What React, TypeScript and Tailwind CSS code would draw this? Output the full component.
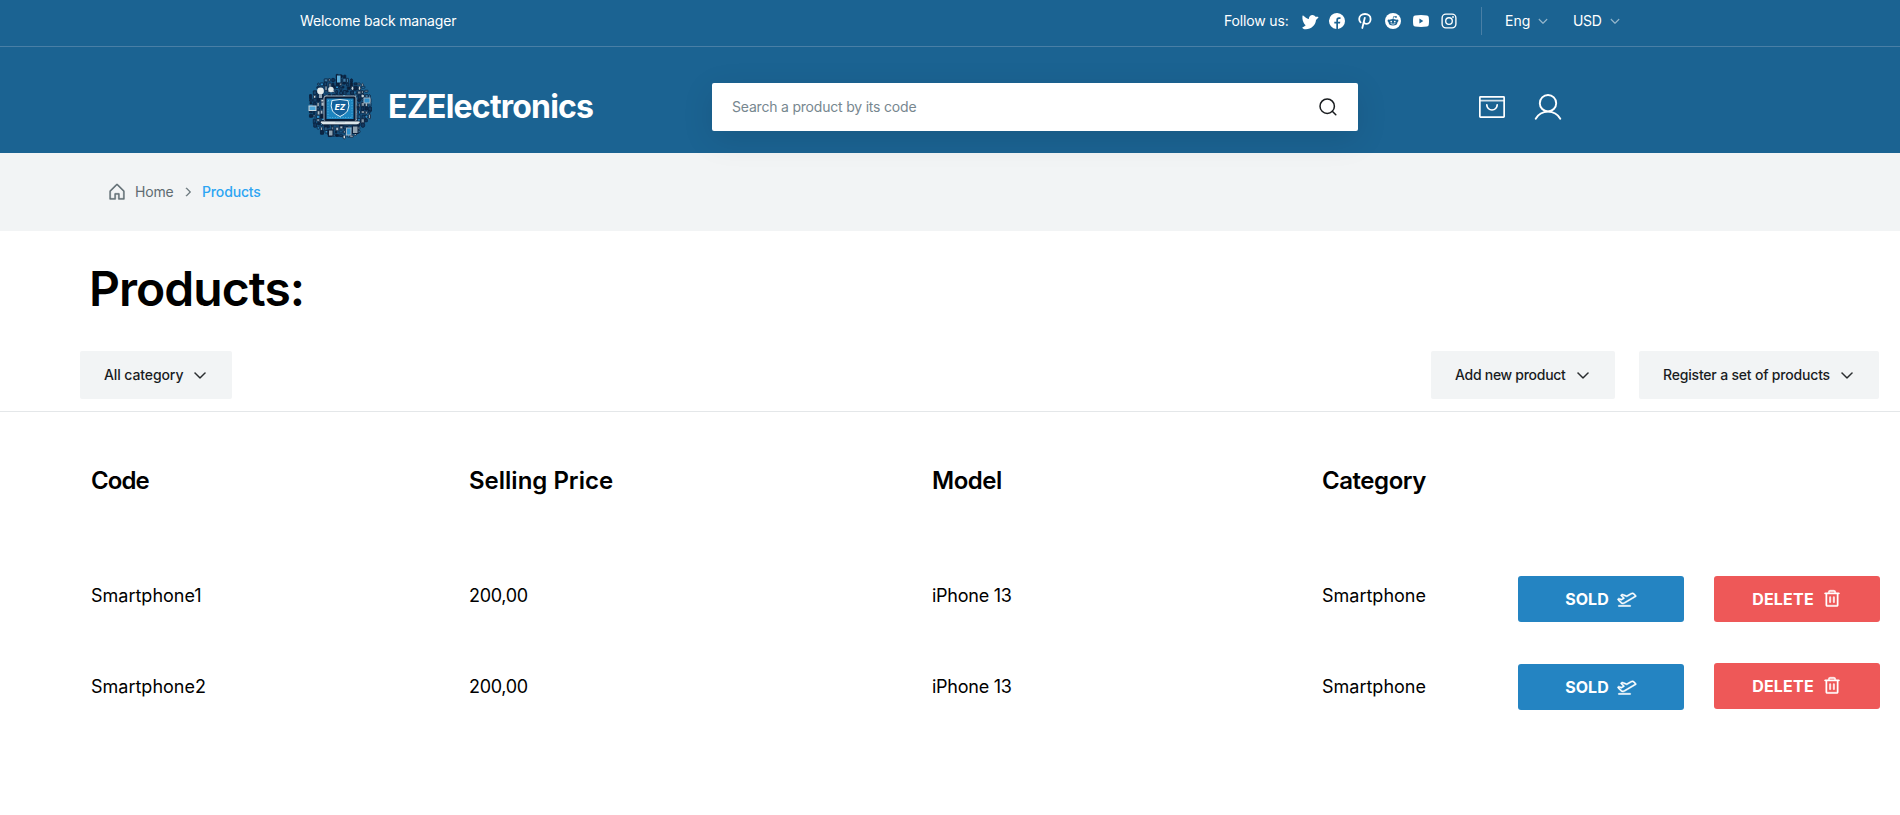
import type { ReactNode } from "react";
import { PiAirplaneTakeoff, PiTrash, PiCaretDown, PiCaretRight, PiTwitterLogoFill, PiHouse } from "react-icons/pi";

type Shape = { x: number; y: number; w: number; h: number; color: string; round: boolean };

const LOGO_COLORS = ["#0b2545", "#12365c", "#a9bcc9", "#2f8fca", "#7f95a5", "#0d2038", "#3f7ba5", "#c9d6dd", "#17466f"];

function buildShapes(): Shape[] {
  const shapes: Shape[] = [];
  let seed = 11;
  const next = () => {
    seed = (seed * 16807) % 2147483647;
    return seed / 2147483647;
  };
  for (let row = 0; row < 17; row++) {
    for (let col = 0; col < 17; col++) {
      const x = 1 + col * 3.7 + next() * 1.4;
      const y = 1 + row * 4 + next() * 1.4;
      const w = 1.4 + next() * 2.2;
      const h = 1.6 + next() * 3;
      const color = LOGO_COLORS[Math.floor(next() * LOGO_COLORS.length)];
      const round = next() > 0.75;
      if (Math.hypot(x + w / 2 - 32, y + h / 2 - 34) < 31.5) {
        shapes.push({ x, y, w, h, color, round });
      }
    }
  }
  return shapes;
}

const SHAPES = buildShapes();

function Logo() {
  return (
    <svg width="64" height="68" viewBox="0 0 64 68" className="shrink-0">
      <circle cx="32" cy="34" r="28" fill="#0d2c50" opacity="0.35" />
      {SHAPES.map((s, i) => (
        <rect key={i} x={s.x} y={s.y} width={s.w} height={s.h} rx={s.round ? 2 : 0.3} fill={s.color} stroke="#0a1f3b" strokeWidth="0.8" />
      ))}
      <circle cx="12.5" cy="18" r="3.4" fill="#e6ecec" />
      <rect x="11" y="21" width="3" height="4" fill="#93a5b3" />
      <circle cx="23" cy="16.5" r="2.7" fill="#dfe7e8" />
      <rect x="28.500" y="2" width="4.500" height="8" fill="#5fb0dc" stroke="#0a1f3b" />
      <rect x="38.500" y="55" width="4.500" height="7" fill="#2f8fca" stroke="#9fb4c4" />
      <rect x="44.500" y="53" width="5.500" height="7.500" fill="#93a5b3" stroke="#0a1f3b" />
      <rect x="20.500" y="57" width="4.500" height="6" fill="#93a5b3" stroke="#0a1f3b" />
      <rect x="1" y="33" width="7" height="4.500" fill="#4aa3d6" stroke="#c9d6dd" />
      <rect x="56" y="25" width="6" height="5" fill="#2f8fca" stroke="#9fb4c4" />
      <rect x="16" y="23" width="32" height="25.500" rx="2" fill="#0a1d36" stroke="#e3ebee" strokeWidth="0.7" />
      <rect x="18.500" y="25.500" width="27" height="20.500" fill="#1c84bf" />
      <rect x="20" y="27.500" width="24" height="17" fill="none" stroke="#57b3df" strokeWidth="1" strokeDasharray="1 1.6" />
      <path d="M24 27.500 L32 26.500 L40 27.500 Q42 33 39.500 38 Q37 41.500 32 43.500 Q27 41.500 24.500 38 Q22 33 24 27.500Z" fill="#14609a" stroke="#dff1f8" strokeWidth="1" />
      <text x="32" y="37" textAnchor="middle" fontSize="8" fontWeight="800" fontStyle="italic" fill="#ffffff">EZ</text>
      <path d="M12.500 48h39.500v1.500q-1 2.300-3 2.300H15.500q-2 0-3-2.300z" fill="#dce6ea" stroke="#0a1d36" strokeWidth="0.8" />
      <rect x="27" y="48" width="10" height="1.200" fill="#7e93a3" />
    </svg>
  );
}

function Facebook() {
  return (
    <svg width="16" height="16" viewBox="0 0 16 16" fill="currentColor">
      <path d="M16 8A8 8 0 1 0 7.300 15.970V10.500H5.300V8.700h2V7a2.700 2.700 0 0 1 2.700-2.700h1.500v1.700H10.100A1.100 1.100 0 0 0 9 7.100v1.600h2.300l-.3 1.800H9v5.430A8 8 0 0 0 16 8Z" />
    </svg>
  );
}

function Pinterest() {
  return (
    <svg width="14" height="16" viewBox="0 0 14 16" fill="none" stroke="currentColor" strokeWidth="1.800" strokeLinecap="round">
      <path d="M6.800 4.800 4.300 15" />
      <path d="M2.600 9.400A4.700 4.700 0 0 1 1.200 6C1.200 3 3.600 1 7 1s5.600 2.100 5.600 4.900c0 2.900-1.700 5-4 5-1.400 0-2.500-.7-2.800-1.700" />
    </svg>
  );
}

function Reddit() {
  return (
    <svg width="16" height="16" viewBox="0 0 16 16">
      <circle cx="8" cy="8" r="8" fill="#ffffff" />
      <g fill="#1b6392">
        <ellipse cx="8" cy="9.300" rx="4.400" ry="3.200" />
        <circle cx="3.800" cy="7.700" r="1.200" />
        <circle cx="12.200" cy="7.700" r="1.200" />
        <circle cx="11" cy="3.900" r="0.900" />
      </g>
      <path d="M8 6.300l.6-2.800 2.200.4" fill="none" stroke="#1b6392" strokeWidth="0.700" />
      <circle cx="6.200" cy="8.600" r="0.850" fill="#ffffff" />
      <circle cx="9.800" cy="8.600" r="0.850" fill="#ffffff" />
      <path d="M6 10.700q2 1.300 4 0" fill="none" stroke="#ffffff" strokeWidth="0.700" strokeLinecap="round" />
    </svg>
  );
}

function Youtube() {
  return (
    <svg width="16" height="12" viewBox="0 0 16 12" fill="currentColor" fillRule="evenodd">
      <path d="M2 .4Q8-.3 14 .4q1.400.2 1.700 1.500.6 4.100 0 8.200-.3 1.300-1.700 1.500-6 .7-12 0Q.6 11.400.3 10.100q-.6-4.100 0-8.200Q.6.600 2 .4ZM6.400 3.600v4.800L10.300 6Z" />
    </svg>
  );
}

function Instagram() {
  return (
    <svg width="16" height="16" viewBox="0 0 16 16" fill="none" stroke="currentColor" strokeWidth="1.350">
      <rect x="1.100" y="1.100" width="13.800" height="13.800" rx="3.800" />
      <circle cx="8" cy="8" r="3.300" />
      <circle cx="12" cy="4" r="0.900" fill="currentColor" stroke="none" />
    </svg>
  );
}

function Bag() {
  return (
    <svg width="26" height="22" viewBox="0 0 26 22" fill="none" stroke="#ffffff" strokeWidth="1.700" strokeLinejoin="round" strokeLinecap="round">
      <rect x="0.850" y="0.850" width="24.300" height="20.300" rx="0.600" />
      <path d="M1 4.700h24" opacity="0.800" />
      <path d="M7.800 8.800a5.200 5.200 0 0 0 10.400 0" />
    </svg>
  );
}

function User() {
  return (
    <svg width="28" height="26" viewBox="0 0 28 26" fill="none" stroke="#ffffff" strokeWidth="1.900" strokeLinecap="round">
      <circle cx="14" cy="9.200" r="8.200" />
      <path d="M1.700 24.700a14.200 14.200 0 0 1 24.600 0" />
    </svg>
  );
}

function Magnifier() {
  return (
    <svg width="18" height="18" viewBox="0 0 18 18" fill="none" stroke="#191c1f" strokeWidth="1.500" strokeLinecap="round">
      <circle cx="8.200" cy="8.200" r="7.200" />
      <path d="m13.300 13.300 3.500 3.500" />
    </svg>
  );
}

function Menu({ children, className }: { children: ReactNode; className: string }) {
  return (
    <button className={`flex h-12 items-center justify-between rounded-[2px] bg-[#f2f4f5] pr-6 pl-6 text-sm font-medium whitespace-nowrap text-[#191c1f] ${className}`}>
      {children}
      <PiCaretDown size={16} stroke="currentColor" strokeWidth={8} className="shrink-0" />
    </button>
  );
}

function ProductRow({ code, className, textClass, deleteClass }: { code: string; className: string; textClass: string; deleteClass: string }) {
  return (
    <div className={`grid h-[46px] grid-cols-[378px_463px_390px_196px_196px_166px] pl-[91px] text-[18px] leading-6 text-black ${className}`}>
      <span className={textClass}>{code}</span>
      <span className={`tracking-[-0.3px] ${textClass}`}>200,00</span>
      <span className={`tracking-[-0.25px] ${textClass}`}>iPhone 13</span>
      <span className={textClass}>Smartphone</span>
      <button className="flex h-[46px] w-[166px] items-center justify-center gap-2 rounded-[3px] bg-[#2484c2] text-base font-bold text-white">
        SOLD <PiAirplaneTakeoff size={20} stroke="currentColor" strokeWidth={6} />
      </button>
      <button className={`flex h-[46px] w-[166px] items-center justify-center gap-2 rounded-[3px] bg-[#ee5858] text-base font-bold tracking-[0.2px] text-white ${deleteClass}`}>
        DELETE <PiTrash size={20} stroke="currentColor" strokeWidth={6} />
      </button>
    </div>
  );
}

export default function App() {
  return (
    <div className="h-[815px] w-[1900px] overflow-hidden bg-white font-['Inter','Liberation_Sans',sans-serif]">
      <header className="h-[153px] bg-[#1b6392] text-white">
        <div className="flex h-[47px] items-center border-b border-[#497fa6] pb-1 pl-[300px] text-sm leading-5">
          <span className="w-[924px] tracking-[-0.18px]">Welcome back manager</span>
          <span className="w-[75px] tracking-[-0.15px]">Follow us:</span>
          <div className="flex w-[182px] items-center gap-2">
            <span className="flex w-5 justify-center"><PiTwitterLogoFill size={19} /></span>
            <span className="flex w-5 justify-center"><Facebook /></span>
            <span className="flex w-5 justify-center"><Pinterest /></span>
            <span className="flex w-5 justify-center"><Reddit /></span>
            <span className="flex w-5 justify-center"><Youtube /></span>
            <span className="flex w-5 justify-center"><Instagram /></span>
          </div>
          <span className="h-7 w-px bg-[#497fa6]" />
          <span className="ml-[23px] w-[32px]">Eng</span>
          <PiCaretDown size={12} stroke="currentColor" strokeWidth={12} className="text-[#a4c1d3]" />
          <span className="ml-[24px] w-[36px] tracking-[-0.3px]">USD</span>
          <PiCaretDown size={12} stroke="currentColor" strokeWidth={12} className="text-[#a4c1d3]" />
        </div>
        <div className="flex h-[106px] items-center pt-[14px] pl-[308px]">
          <Logo />
          <span className="ml-[16px] w-[324px] text-[32px] leading-10 font-bold tracking-[-0.8px]">EZElectronics</span>
          <div className="flex h-12 w-[646px] items-center justify-between rounded-[2px] bg-white pr-[21px] pl-5 shadow-[0_8px_32px_rgba(0,0,0,0.1)]">
            <span className="text-sm tracking-[-0.2px] text-[#77878f]">Search a product by its code</span>
            <Magnifier />
          </div>
          <div className="ml-[121px] flex items-center gap-[29px]">
            <Bag />
            <User />
          </div>
        </div>
      </header>

      <nav className="flex h-[78px] items-center bg-[#f2f4f5] pl-[107px] text-sm text-[#5f6c72]">
        <PiHouse size={20} stroke="currentColor" strokeWidth={4} />
        <span className="ml-2 w-[47px] tracking-[-0.2px]">Home</span>
        <PiCaretRight size={12} stroke="currentColor" strokeWidth={12} />
        <span className="ml-2 font-medium tracking-[-0.15px] text-[#2da5f3]">Products</span>
      </nav>

      <main>
        <h1 className="pt-[29px] pl-[89px] text-[48px] leading-[58px] font-semibold tracking-[-0.95px] text-black">Products:</h1>
        <div className="mt-[33px] flex h-[61px] items-start border-b border-[#e4e7e9] pl-20">
          <Menu className="w-[152px] tracking-[-0.1px]">All category</Menu>
          <Menu className="ml-[1199px] w-[184px] tracking-[-0.28px]">Add new product</Menu>
          <Menu className="ml-6 w-[240px] tracking-[-0.19px]">Register a set of products</Menu>
        </div>
        <div className="mt-[53px] grid grid-cols-[378px_463px_390px_1fr] pl-[91px] text-[24px] leading-8 font-semibold text-black">
          <span className="tracking-[-0.9px]">Code</span>
          <span>Selling Price</span>
          <span className="tracking-[-0.5px]">Model</span>
          <span className="tracking-[-0.45px]">Category</span>
        </div>
        <ProductRow code="Smartphone1" className="mt-[79px]" textClass="pt-2" deleteClass="" />
        <ProductRow code="Smartphone2" className="mt-[42px]" textClass="pt-[11px]" deleteClass="-mt-px" />
      </main>
    </div>
  );
}
